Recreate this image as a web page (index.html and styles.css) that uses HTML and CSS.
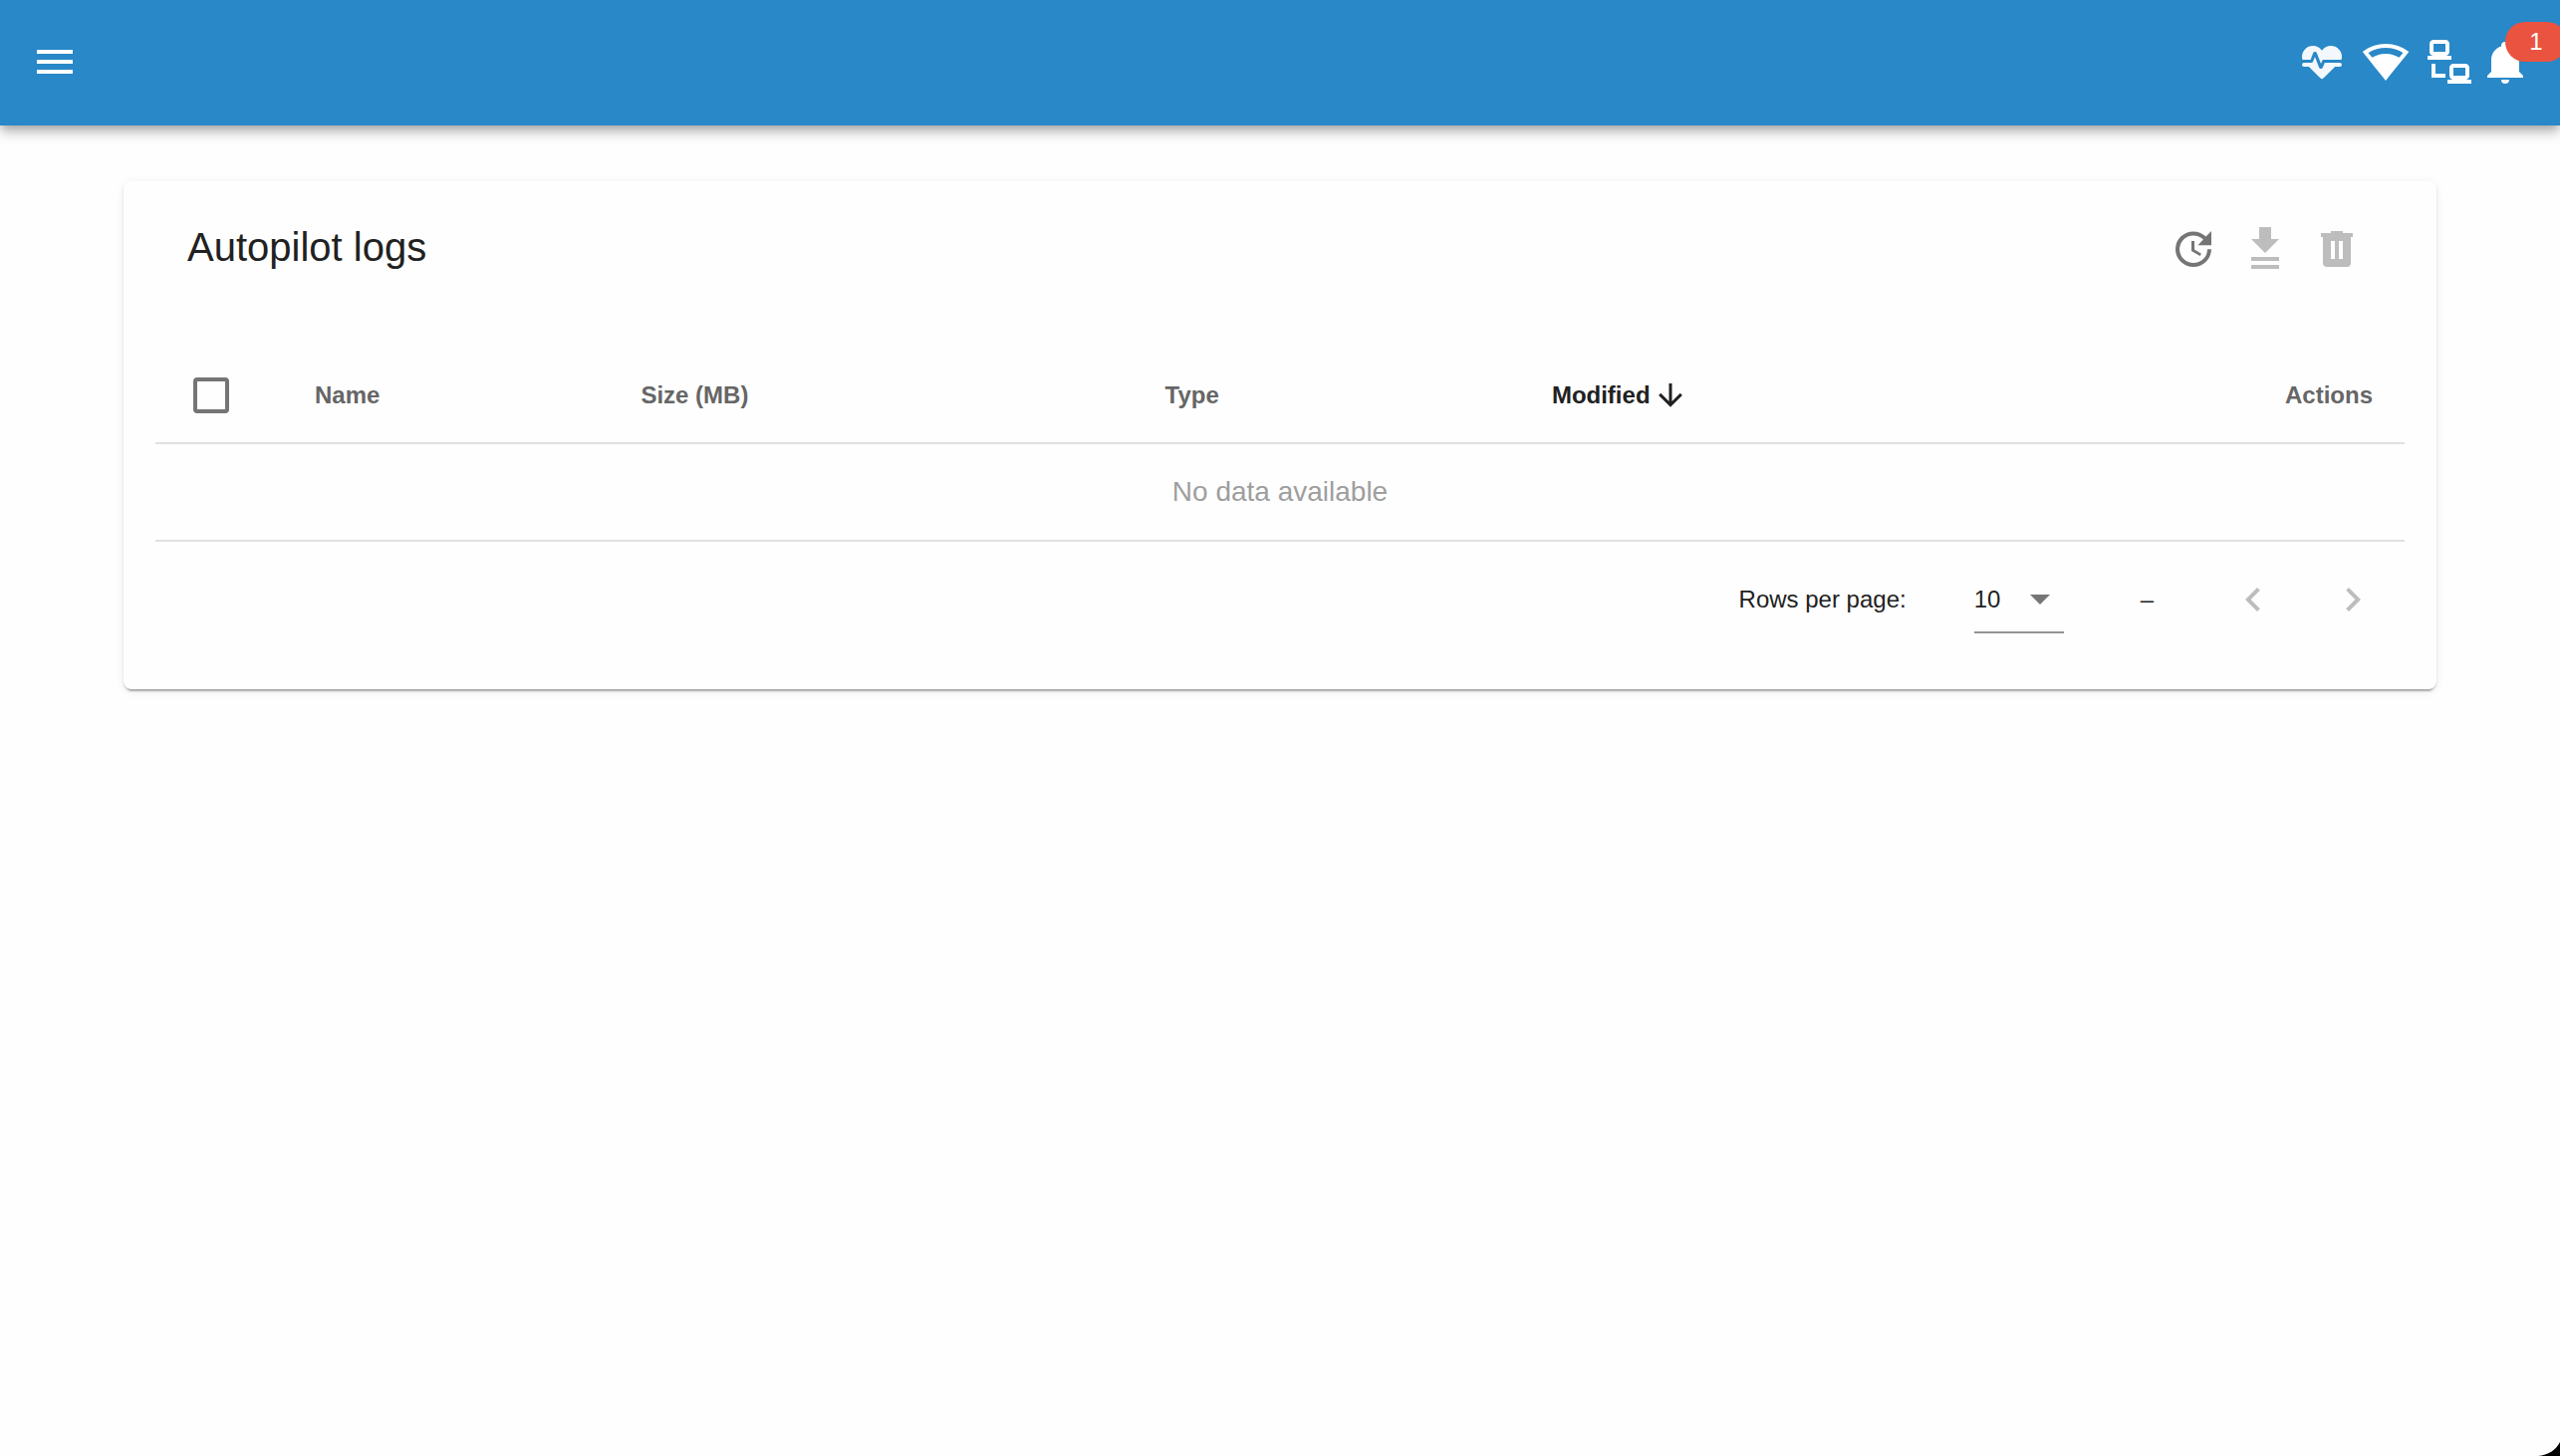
FILE: index.html
```html
<!DOCTYPE html>
<html lang="en">
<head>
<meta charset="utf-8">
<title>Autopilot logs</title>
<link rel="stylesheet" href="styles.css">
</head>
<body>
<header class="app-bar">
  <button class="icon-btn" type="button" aria-label="Menu">
    <svg class="icon" viewBox="0 0 24 24"><path d="M3,6H21V8H3V6M3,11H21V13H3V11M3,16H21V18H3V16Z"/></svg>
  </button>
  <div class="tray">
    <button class="icon-btn heartbeat" type="button" aria-label="Vehicle heartbeat">
      <svg class="icon" viewBox="0 0 24 24"><path d="M7.5,4A5.5,5.5 0 0,0 2,9.5C2,10 2.09,10.5 2.22,11H6.3L7.57,7.63C7.87,6.83 9.05,6.75 9.43,7.63L11.5,13L12.09,11.58C12.22,11.25 12.57,11 13,11H21.78C21.91,10.5 22,10 22,9.5A5.5,5.5 0 0,0 16.5,4C14.64,4 13,4.93 12,6.34C11,4.93 9.36,4 7.5,4M3,12.5A1,1 0 0,0 2,13.5A1,1 0 0,0 3,14.5H5.44L11,20C12,20.9 12,20.9 13,20L18.56,14.5H21A1,1 0 0,0 22,13.5A1,1 0 0,0 21,12.5H13.4L12.47,14.8C12.07,15.81 10.92,15.67 10.55,14.83L8.5,9.5L7.54,11.83C7.39,12.21 7.05,12.5 6.6,12.5H3Z"/></svg>
    </button>
    <button class="icon-btn" type="button" aria-label="Wifi">
      <svg class="icon" viewBox="0 0 24 24"><path d="M12,3C7.79,3 3.7,4.41 0.38,7C4.41,12.06 7.89,16.37 12,21.5C16.08,16.42 20.24,11.24 23.65,7C20.32,4.41 16.22,3 12,3M12,5C15.07,5 18.09,5.86 20.71,7.45L18.77,9.88C17.26,9 14.88,8 12,8C9,8 6.68,9 5.21,9.84L3.27,7.44C5.91,5.85 8.93,5 12,5Z"/></svg>
    </button>
    <button class="icon-btn" type="button" aria-label="Ethernet">
      <svg class="icon" viewBox="0 0 24 24"><path d="M4,1C2.89,1 2,1.89 2,3V7C2,8.11 2.89,9 4,9H1V11H13V9H10C11.11,9 12,8.11 12,7V3C12,1.89 11.11,1 10,1H4M4,3H10V7H4V3M3,13V20H10V18H5V13H3M14,13C12.89,13 12,13.89 12,15V19C12,20.11 12.89,21 14,21H11V23H23V21H20C21.11,21 22,20.11 22,19V15C22,13.89 21.11,13 20,13H14M14,15H20V19H14V15Z"/></svg>
    </button>
    <button class="icon-btn bell" type="button" aria-label="Notifications">
      <svg class="icon" viewBox="0 0 24 24"><path d="M21,19V20H3V19L5,17V11C5,7.9 7.03,5.17 10,4.29C10,4.19 10,4.1 10,4A2,2 0 0,1 12,2A2,2 0 0,1 14,4C14,4.1 14,4.19 14,4.29C16.97,5.17 19,7.9 19,11V17L21,19M14,21A2,2 0 0,1 12,23A2,2 0 0,1 10,21"/></svg>
      <span class="badge">1</span>
    </button>
  </div>
</header>

<main class="content">
  <section class="card">
    <div class="card-head">
      <h1 class="card-title">Autopilot logs</h1>
      <div class="card-actions">
        <button class="tool-btn" type="button" aria-label="Refresh">
          <svg class="icon" viewBox="0 0 24 24"><path d="M21,10.12H14.22L16.96,7.3C14.23,4.6 9.81,4.5 7.08,7.2C4.35,9.91 4.35,14.28 7.08,17C9.81,19.7 14.23,19.7 16.96,17C18.32,15.65 19,14.08 19,12.1H21C21,14.08 20.12,16.65 18.36,18.39C14.85,21.87 9.15,21.87 5.64,18.39C2.14,14.92 2.11,9.28 5.62,5.81C9.13,2.34 14.76,2.34 18.27,5.81L21,3V10.12M12.5,8V12.25L16,14.33L15.28,15.54L11,13V8H12.5Z"/></svg>
        </button>
        <button class="tool-btn" type="button" aria-label="Download selected" disabled>
          <svg class="icon" viewBox="0 0 24 24"><path d="M9,1V7H5L12,14L19,7H15V1H9M5,16V18H19V16H5M5,20V22H19V20H5Z"/></svg>
        </button>
        <button class="tool-btn" type="button" aria-label="Remove selected" disabled>
          <svg class="icon" viewBox="0 0 24 24"><path d="M9,3V4H4V6H5V19A2,2 0 0,0 7,21H17A2,2 0 0,0 19,19V6H20V4H15V3H9M9,8H11V17H9V8M13,8H15V17H13V8Z"/></svg>
        </button>
      </div>
    </div>

    <table class="logs">
      <thead>
        <tr>
          <th class="col-check"><input class="check" type="checkbox" aria-label="Select all"></th>
          <th class="col-name">Name</th>
          <th class="col-size">Size (MB)</th>
          <th class="col-type">Type</th>
          <th class="col-modified" aria-sort="descending"><span class="sorted">Modified<svg class="sort-icon" viewBox="0 0 24 24"><path d="M11,4H13V16L18.5,10.5L19.92,11.92L12,19.84L4.08,11.92L5.5,10.5L11,16V4Z"/></svg></span></th>
          <th class="col-actions">Actions</th>
        </tr>
      </thead>
      <tbody>
        <tr><td class="empty" colspan="6">No data available</td></tr>
      </tbody>
    </table>

    <div class="pager">
      <label for="rows">Rows per page:</label>
      <div class="select">
        <select id="rows"><option>10</option><option>20</option><option>50</option></select>
        <svg class="icon" viewBox="0 0 24 24"><path d="M7,10L12,15L17,10H7Z"/></svg>
      </div>
      <span class="range">–</span>
      <div class="pages">
        <button class="tool-btn" type="button" aria-label="Previous page" disabled>
          <svg class="icon" viewBox="0 0 24 24"><path d="M15.41,16.58L10.83,12L15.41,7.41L14,6L8,12L14,18L15.41,16.58Z"/></svg>
        </button>
        <button class="tool-btn" type="button" aria-label="Next page" disabled>
          <svg class="icon" viewBox="0 0 24 24"><path d="M8.59,16.58L13.17,12L8.59,7.41L10,6L16,12L10,18L8.59,16.58Z"/></svg>
        </button>
      </div>
    </div>
  </section>
</main>
<svg class="corner" viewBox="0 0 22 14"><path d="M0,14C10,13 18,8 22,0V14Z"/></svg>
</body>
</html>
```
FILE: styles.css
```css
* {
  box-sizing: border-box;
}

body {
  margin: 0;
  min-height: 100vh;
  overflow-x: hidden;
  background: #fefefe;
  color: #212121;
  font-family: "Liberation Sans", Arial, Helvetica, sans-serif;
  font-size: 24px;
  line-height: 32px;
}

button {
  display: flex;
  align-items: center;
  justify-content: center;
  padding: 0;
  border: 0;
  background: none;
  color: inherit;
  font: inherit;
}

.icon {
  display: block;
  width: 48px;
  height: 48px;
  fill: currentColor;
}

/* Top bar */
.app-bar {
  display: flex;
  align-items: center;
  justify-content: space-between;
  height: 126px;
  padding: 0 31px 2px;
  background: #2888c8;
  color: #fff;
  box-shadow: 0 4px 8px -2px rgba(0, 0, 0, 0.2), 0 8px 10px 0 rgba(0, 0, 0, 0.14), 0 2px 20px 0 rgba(0, 0, 0, 0.12);
}

.tray {
  display: flex;
  gap: 16px;
}

.heartbeat {
  opacity: 0.94;
}

.bell {
  position: relative;
  margin-left: -8px;
}

.badge {
  position: absolute;
  top: -16px;
  left: 24px;
  width: 62px;
  height: 40px;
  border-radius: 20px;
  background: #e9533f;
  line-height: 40px;
  text-align: center;
}

/* Card */
.content {
  padding: 56px 124px;
}

.card {
  padding: 0 32px 32px;
  border-radius: 8px;
  background: #fefefe;
  box-shadow: 0 6px 2px -4px rgba(0, 0, 0, 0.2), 0 2px 2px 0 rgba(0, 0, 0, 0.14), 0 2px 10px 0 rgba(0, 0, 0, 0.08);
}

.card-head {
  display: flex;
  align-items: center;
  justify-content: space-between;
  height: 136px;
  margin-bottom: 32px;
  padding: 0 32px;
}

.card-title {
  margin: 0;
  padding-bottom: 4px;
  font-size: 40px;
  font-weight: 400;
  line-height: 64px;
}

.card-actions {
  display: flex;
}

.tool-btn {
  width: 72px;
  height: 72px;
  color: #757575;
}

.tool-btn:disabled {
  color: #bdbdbd;
}

/* Table */
.logs {
  width: 100%;
  border-collapse: separate;
  border-spacing: 0;
  table-layout: fixed;
}

.logs th {
  height: 96px;
  padding: 0 32px;
  border-bottom: 2px solid #e0e0e0;
  color: #666;
  text-align: left;
  vertical-align: middle;
}

.logs td {
  height: 98px;
  padding: 0 32px;
  border-bottom: 2px solid #e0e0e0;
}

.col-check {
  width: 128px;
}

.col-name {
  width: 14.5%;
}

.col-size {
  width: 23.3%;
}

.col-type {
  width: 17.2%;
}

.logs .col-modified {
  color: #212121;
}

.logs .col-actions {
  text-align: right;
}

.logs .empty {
  color: #9e9e9e;
  font-size: 28px;
  text-align: center;
}

.check {
  display: block;
  width: 36px;
  height: 36px;
  margin: 0 6px;
  appearance: none;
  border: 4px solid #757575;
  border-radius: 4px;
}

.sorted {
  display: flex;
  align-items: center;
  gap: 2px;
}

.sort-icon {
  width: 36px;
  height: 36px;
  fill: currentColor;
}

/* Pagination */
.pager {
  display: flex;
  align-items: center;
  justify-content: flex-end;
  height: 116px;
  padding-right: 16px;
}

.select {
  display: grid;
  align-items: center;
  width: 90px;
  height: 68px;
  margin: 0 77px 0 68px;
  border-bottom: 2px solid #949494;
}

.select select,
.select .icon {
  grid-area: 1 / 1;
}

.select select {
  width: 100%;
  height: 100%;
  padding: 2px 0 0;
  appearance: none;
  border: 0;
  background: none;
  color: inherit;
  font: inherit;
}

.select .icon {
  justify-self: end;
  color: #757575;
  pointer-events: none;
}

.range {
  margin-right: 64px;
}

.pages {
  display: flex;
  gap: 28px;
}

.corner {
  position: fixed;
  right: 0;
  bottom: 0;
  width: 22px;
  height: 14px;
}
```
